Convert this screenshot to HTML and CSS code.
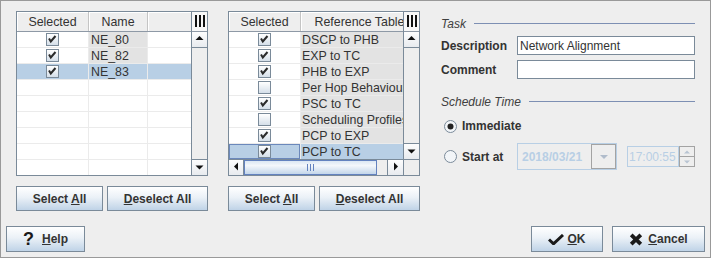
FILE: index.html
```html
<!doctype html>
<html lang="en">
<head>
  <meta charset="utf-8">
  <title>Schedule Task</title>
  <link rel="stylesheet" href="styles.css">
</head>
<body>
  <div class="dialog">
    <div class="main">

      <div class="list-col">
        <div class="grid-box">
          <div class="grid-top">
            <div class="grid-main">
              <div class="grid-head">
                <div class="hcell c-sel">Selected</div>
                <div class="hcell c-name">Name</div>
                <div class="hcell c-fill"></div>
              </div>
              <div class="grid-row">
                <div class="cell c-sel"><span class="check"><svg class="tick" width="11" height="11" viewBox="0 0 11 11"><polyline points="2,4.5 3.8,7.5 8.5,2"/></svg></span></div>
                <div class="cell c-name ro">NE_80</div>
                <div class="cell c-fill"></div>
              </div>
              <div class="grid-row">
                <div class="cell c-sel"><span class="check"><svg class="tick" width="11" height="11" viewBox="0 0 11 11"><polyline points="2,4.5 3.8,7.5 8.5,2"/></svg></span></div>
                <div class="cell c-name ro">NE_82</div>
                <div class="cell c-fill"></div>
              </div>
              <div class="grid-row sel">
                <div class="cell c-sel"><span class="check"><svg class="tick" width="11" height="11" viewBox="0 0 11 11"><polyline points="2,4.5 3.8,7.5 8.5,2"/></svg></span></div>
                <div class="cell c-name ro">NE_83</div>
                <div class="cell c-fill"></div>
              </div>
              <div class="grid-row"><div class="cell c-sel"></div><div class="cell c-name"></div><div class="cell c-fill"></div></div>
              <div class="grid-row"><div class="cell c-sel"></div><div class="cell c-name"></div><div class="cell c-fill"></div></div>
              <div class="grid-row"><div class="cell c-sel"></div><div class="cell c-name"></div><div class="cell c-fill"></div></div>
              <div class="grid-row"><div class="cell c-sel"></div><div class="cell c-name"></div><div class="cell c-fill"></div></div>
              <div class="grid-row"><div class="cell c-sel"></div><div class="cell c-name"></div><div class="cell c-fill"></div></div>
              <div class="grid-row"><div class="cell c-sel"></div><div class="cell c-name"></div><div class="cell c-fill"></div></div>
            </div>
            <div class="vscroll">
              <div class="corner"><svg width="15" height="19" viewBox="0 0 15 19"><rect x="3" y="3" width="2" height="12"/><rect x="7" y="3" width="2" height="12"/><rect x="11" y="3" width="2" height="12"/></svg></div>
              <div class="sb-btn"><svg width="15" height="15" viewBox="0 0 15 15"><polygon points="3.5,8 11.5,8 7.5,4"/></svg></div>
              <div class="sb-track"></div>
              <div class="sb-btn down"><svg width="15" height="15" viewBox="0 0 15 15"><polygon points="3.5,5.5 11.5,5.5 7.5,9.5"/></svg></div>
            </div>
          </div>
        </div>
        <div class="btn-row">
          <button class="btn w-sel"><span>Select <u>A</u>ll</span></button>
          <button class="btn w-desel"><span><u>D</u>eselect All</span></button>
        </div>
      </div>

      <div class="list-col">
        <div class="grid-box">
          <div class="grid-top">
            <div class="grid-main">
              <div class="grid-head">
                <div class="hcell c-sel">Selected</div>
                <div class="hcell c-ref">Reference Table</div>
              </div>
              <div class="grid-row">
                <div class="cell c-sel"><span class="check"><svg class="tick" width="11" height="11" viewBox="0 0 11 11"><polyline points="2,4.5 3.8,7.5 8.5,2"/></svg></span></div>
                <div class="cell c-ref ro">DSCP to PHB</div>
              </div>
              <div class="grid-row">
                <div class="cell c-sel"><span class="check"><svg class="tick" width="11" height="11" viewBox="0 0 11 11"><polyline points="2,4.5 3.8,7.5 8.5,2"/></svg></span></div>
                <div class="cell c-ref ro">EXP to TC</div>
              </div>
              <div class="grid-row">
                <div class="cell c-sel"><span class="check"><svg class="tick" width="11" height="11" viewBox="0 0 11 11"><polyline points="2,4.5 3.8,7.5 8.5,2"/></svg></span></div>
                <div class="cell c-ref ro">PHB to EXP</div>
              </div>
              <div class="grid-row">
                <div class="cell c-sel"><span class="check"></span></div>
                <div class="cell c-ref ro">Per Hop Behaviour</div>
              </div>
              <div class="grid-row">
                <div class="cell c-sel"><span class="check"><svg class="tick" width="11" height="11" viewBox="0 0 11 11"><polyline points="2,4.5 3.8,7.5 8.5,2"/></svg></span></div>
                <div class="cell c-ref ro">PSC to TC</div>
              </div>
              <div class="grid-row">
                <div class="cell c-sel"><span class="check"></span></div>
                <div class="cell c-ref ro">Scheduling Profiles</div>
              </div>
              <div class="grid-row">
                <div class="cell c-sel"><span class="check"><svg class="tick" width="11" height="11" viewBox="0 0 11 11"><polyline points="2,4.5 3.8,7.5 8.5,2"/></svg></span></div>
                <div class="cell c-ref ro">PCP to EXP</div>
              </div>
              <div class="grid-row sel">
                <div class="cell c-sel focus"><span class="check"><svg class="tick" width="11" height="11" viewBox="0 0 11 11"><polyline points="2,4.5 3.8,7.5 8.5,2"/></svg></span></div>
                <div class="cell c-ref ro">PCP to TC</div>
              </div>
            </div>
            <div class="vscroll">
              <div class="corner"><svg width="15" height="19" viewBox="0 0 15 19"><rect x="3" y="3" width="2" height="12"/><rect x="7" y="3" width="2" height="12"/><rect x="11" y="3" width="2" height="12"/></svg></div>
              <div class="sb-btn"><svg width="15" height="15" viewBox="0 0 15 15"><polygon points="3.5,8 11.5,8 7.5,4"/></svg></div>
              <div class="sb-track"></div>
              <div class="sb-btn down"><svg width="15" height="15" viewBox="0 0 15 15"><polygon points="3.5,5.5 11.5,5.5 7.5,9.5"/></svg></div>
            </div>
          </div>
          <div class="grid-bottom">
            <div class="hscroll">
              <div class="sb-hbtn left"><svg width="14" height="15" viewBox="0 0 14 15"><polygon points="5,6.5 9,2.5 9,10.5"/></svg></div>
              <div class="thumb"><svg width="7" height="7" viewBox="0 0 7 7"><rect x="0" y="0" width="1" height="7"/><rect x="3" y="0" width="1" height="7"/><rect x="6" y="0" width="1" height="7"/></svg></div>
              <div class="sb-htrack"></div>
              <div class="sb-hbtn right"><svg width="15" height="15" viewBox="0 0 15 15"><polygon points="6,2.5 10,6.5 6,10.5"/></svg></div>
            </div>
            <div class="sb-corner"></div>
          </div>
        </div>
        <div class="btn-row">
          <button class="btn w-sel"><span>Select <u>A</u>ll</span></button>
          <button class="btn w-desel"><span><u>D</u>eselect All</span></button>
        </div>
      </div>

      <div class="form">
        <div class="titled"><span>Task</span><div class="rule"></div></div>
        <div class="field">
          <label>Description</label>
          <div class="text">Network Alignment</div>
        </div>
        <div class="field">
          <label>Comment</label>
          <div class="text"></div>
        </div>
        <div class="titled gap-lg"><span>Schedule Time</span><div class="rule"></div></div>
        <div class="radio-row">
          <div class="radio">
            <svg width="13" height="13" viewBox="0 0 13 13"><circle class="ring" cx="6.5" cy="6.5" r="6"/><circle class="dot" cx="6.5" cy="6.5" r="3"/></svg>
            <span>Immediate</span>
          </div>
        </div>
        <div class="radio-row start">
          <div class="radio">
            <svg width="13" height="13" viewBox="0 0 13 13"><circle class="ring" cx="6.5" cy="6.5" r="6"/></svg>
            <span>Start at</span>
          </div>
          <div class="combo">
            <div class="combo-text">2018/03/21</div>
            <div class="combo-btn"><svg width="10" height="6" viewBox="0 0 10 6"><polygon points="1,1 9,1 5,5"/></svg></div>
          </div>
          <div class="spinner">
            <div class="spin-text">17:00:55</div>
            <div class="spin-btns">
              <div class="spin-btn"><svg width="6" height="4" viewBox="0 0 6 4"><polygon points="0,3.5 6,3.5 3,0.5"/></svg></div>
              <div class="spin-btn"><svg width="6" height="4" viewBox="0 0 6 4"><polygon points="0,0.5 6,0.5 3,3.5"/></svg></div>
            </div>
          </div>
        </div>
      </div>

    </div>

    <div class="footer">
      <button class="btn btn-lg w-help"><span class="qmark">?</span><span><u>H</u>elp</span></button>
      <div class="spacer"></div>
      <button class="btn btn-lg w-ok"><svg width="16" height="11" viewBox="0 0 16 11"><path d="M1 5.5 L5.5 9.8 L15 1"/></svg><span><u>O</u>K</span></button>
      <button class="btn btn-lg w-cancel"><svg width="14" height="13" viewBox="0 0 14 13"><path d="M2.2 1.8 L11.8 11.2 M11.8 1.8 L2.2 11.2"/></svg><span><u>C</u>ancel</span></button>
    </div>
  </div>
</body>
</html>
```

FILE: styles.css
```css
* {
  box-sizing: border-box;
}

body {
  margin: 0;
  background: #eeeeee;
  font-family: "Liberation Sans", Arial, sans-serif;
  font-size: 12px;
  color: #333333;
}

.dialog {
  width: 711px;
  height: 258px;
  border: 1px solid #999999;
  background: #eeeeee;
  display: flex;
  flex-direction: column;
}

.main {
  display: flex;
  padding: 10px 0 0 15px;
}

.list-col {
  width: 192px;
  display: flex;
  flex-direction: column;
}

.list-col + .list-col {
  margin-left: 20px;
}

/* tables */
.grid-box {
  height: 165px;
  border: 1px solid #7a8a99;
  background: #ffffff;
  display: flex;
  flex-direction: column;
  font-size: 12.4px;
}

.grid-top {
  flex: 1;
  display: flex;
  min-height: 0;
}

.grid-main {
  width: 174px;
  flex: none;
  overflow: hidden;
}

.grid-head,
.grid-row {
  display: flex;
  width: max-content;
  min-width: 100%;
}

.grid-head {
  height: 20px;
  border-bottom: 1px solid #8e99a6;
  background: #eeeeee;
}

.hcell {
  flex: none;
  display: flex;
  align-items: center;
  justify-content: center;
  border-right: 1px solid #c4c4c4;
  box-shadow: inset 1px 1px 0 #ffffff;
  white-space: nowrap;
}

.grid-row {
  height: 16px;
  border-top: 1px solid #ebebeb;
}

.grid-head + .grid-row {
  height: 15px;
  border-top: 0;
}

.cell {
  flex: none;
  display: flex;
  align-items: center;
  padding-left: 2px;
  border-right: 1px solid #ebebeb;
  white-space: nowrap;
  overflow: hidden;
}

.c-sel {
  width: 72px;
  justify-content: center;
  padding-left: 0;
}

.c-name {
  width: 59px;
}

.c-ref {
  width: 116px;
  padding-left: 1px;
}

.hcell.c-ref {
  border-right: 0;
}

.c-fill {
  flex: 1;
  border-right: 0;
}

.ro {
  background: #e3e3e3;
}

.grid-row.sel .cell {
  background: #b8cfe5;
}

.cell.focus {
  box-shadow: inset 0 0 0 1px #6b88bb;
}

.check {
  width: 13px;
  height: 13px;
  border: 1px solid #7a8a99;
  background: linear-gradient(to bottom, #ffffff, #d5dfe9);
  display: block;
}

.tick {
  display: block;
  fill: none;
  stroke: #2b2b2b;
  stroke-width: 2;
}

/* scrollbars */
.vscroll {
  width: 16px;
  flex: none;
  border-left: 1px solid #7a8a99;
  background: #eeeeee;
  display: flex;
  flex-direction: column;
}

.corner {
  height: 20px;
  flex: none;
  border-bottom: 1px solid #8e99a6;
  background: #f7f7f7;
}

.corner svg,
.sb-btn svg,
.sb-hbtn svg {
  display: block;
  fill: #111111;
}

.sb-btn {
  height: 16px;
  flex: none;
  border-bottom: 1px solid #7a8a99;
  background: linear-gradient(to bottom, #fdfdfd, #e8ebef);
}

.sb-btn.down {
  border-bottom: 0;
  border-top: 1px solid #7a8a99;
}

.sb-track {
  flex: 1;
}

.grid-bottom {
  height: 16px;
  flex: none;
  display: flex;
  border-top: 1px solid #7a8a99;
  background: #eeeeee;
}

.hscroll {
  width: 174px;
  display: flex;
}

.sb-hbtn {
  width: 15px;
  background: linear-gradient(to bottom, #fdfdfd, #e8ebef);
}

.sb-hbtn.left {
  border-right: 1px solid #7a8a99;
}

.sb-hbtn.right {
  width: 16px;
  border-left: 1px solid #7a8a99;
}

.thumb {
  width: 133px;
  border: 1px solid #6382bf;
  background: linear-gradient(to bottom, #dce7f3 0%, #f4f7fb 35%, #c3d6ea 100%);
  display: flex;
  align-items: center;
  justify-content: center;
}

.thumb svg {
  display: block;
  fill: #6382bf;
}

.sb-htrack {
  flex: 1;
}

.sb-corner {
  flex: 1;
  border-left: 1px solid #7a8a99;
}

/* buttons */
.btn-row {
  display: flex;
  gap: 4px;
  margin-top: 10px;
}

.btn {
  font: bold 12px "Liberation Sans", Arial, sans-serif;
  color: #333333;
  height: 25px;
  padding: 0;
  border: 1px solid #7a8a99;
  background: linear-gradient(to bottom, #ffffff 0%, #ebf1f7 45%, #bfd3e7 100%);
  display: inline-flex;
  align-items: center;
  justify-content: center;
  white-space: pre;
}

.w-sel {
  width: 87px;
}

.w-desel {
  width: 101px;
}

.btn-lg {
  height: 26px;
}

.footer {
  margin-top: auto;
  display: flex;
  padding: 0 5px 5px 5px;
}

.spacer {
  flex: 1;
}

.w-help {
  width: 79px;
  gap: 8px;
}

.qmark {
  font-size: 18px;
  color: #1a1a1a;
  line-height: 1;
}

.w-ok {
  width: 72px;
  gap: 3px;
  margin-right: 9px;
}

.w-cancel {
  width: 93px;
  gap: 5px;
}

.w-ok svg,
.w-cancel svg {
  display: block;
  fill: none;
  stroke: #1a1a1a;
}

.w-ok svg {
  stroke-width: 3;
}

.w-cancel svg {
  stroke-width: 3.8;
}

/* form */
.form {
  width: 255px;
  margin-left: 20px;
  display: flex;
  flex-direction: column;
}

.titled {
  display: flex;
  align-items: center;
  height: 15px;
  margin-top: 5px;
  font-style: italic;
  color: #404040;
}

.titled.gap-lg {
  margin-top: 15px;
}

.titled span {
  padding-left: 1px;
}

.titled .rule {
  flex: 1;
  height: 1px;
  margin-left: 8px;
  background: #7d8fb3;
}

.field {
  display: flex;
  align-items: center;
  height: 19px;
  margin-top: 5px;
}

.field label {
  width: 77px;
  padding-left: 1px;
  font-weight: bold;
}

.field .text {
  flex: 1;
  height: 19px;
  padding-left: 2px;
  border: 1px solid #7a8a99;
  background: #ffffff;
  display: flex;
  align-items: center;
  white-space: nowrap;
}

.radio-row {
  display: flex;
  align-items: center;
  height: 18px;
  margin-top: 8px;
}

.radio-row.start {
  height: 27px;
}

.radio {
  width: 77px;
  padding-left: 4px;
  display: flex;
  align-items: center;
  gap: 5px;
  font-weight: bold;
}

.radio svg {
  display: block;
  flex: none;
}

.ring {
  fill: #f2f5f8;
  stroke: #7a8a99;
  stroke-width: 1;
}

.dot {
  fill: #222222;
}

.combo {
  width: 100px;
  height: 27px;
  border: 1px solid #b8cfe5;
  display: flex;
}

.combo-text {
  flex: 1;
  padding-left: 4px;
  display: flex;
  align-items: center;
  font-weight: bold;
  color: #b8cfe5;
}

.combo-btn {
  width: 25px;
  border: 1px solid #a3a3a3;
  background: #eeeeee;
  display: flex;
  align-items: center;
  justify-content: center;
}

.combo-btn svg {
  display: block;
  fill: #b0bccb;
}

.spinner {
  width: 68px;
  height: 21px;
  margin-left: 10px;
  display: flex;
}

.spin-text {
  width: 52px;
  border: 1px solid #b8cfe5;
  padding-left: 1px;
  display: flex;
  align-items: center;
  color: #b8cfe5;
}

.spin-btns {
  flex: 1;
  display: flex;
  flex-direction: column;
}

.spin-btn {
  flex: 1;
  border: 1px solid #a3a3a3;
  display: flex;
  align-items: center;
  justify-content: center;
}

.spin-btn + .spin-btn {
  border-top: 0;
}

.spin-btn svg {
  display: block;
  fill: #b8c4d2;
}
```
